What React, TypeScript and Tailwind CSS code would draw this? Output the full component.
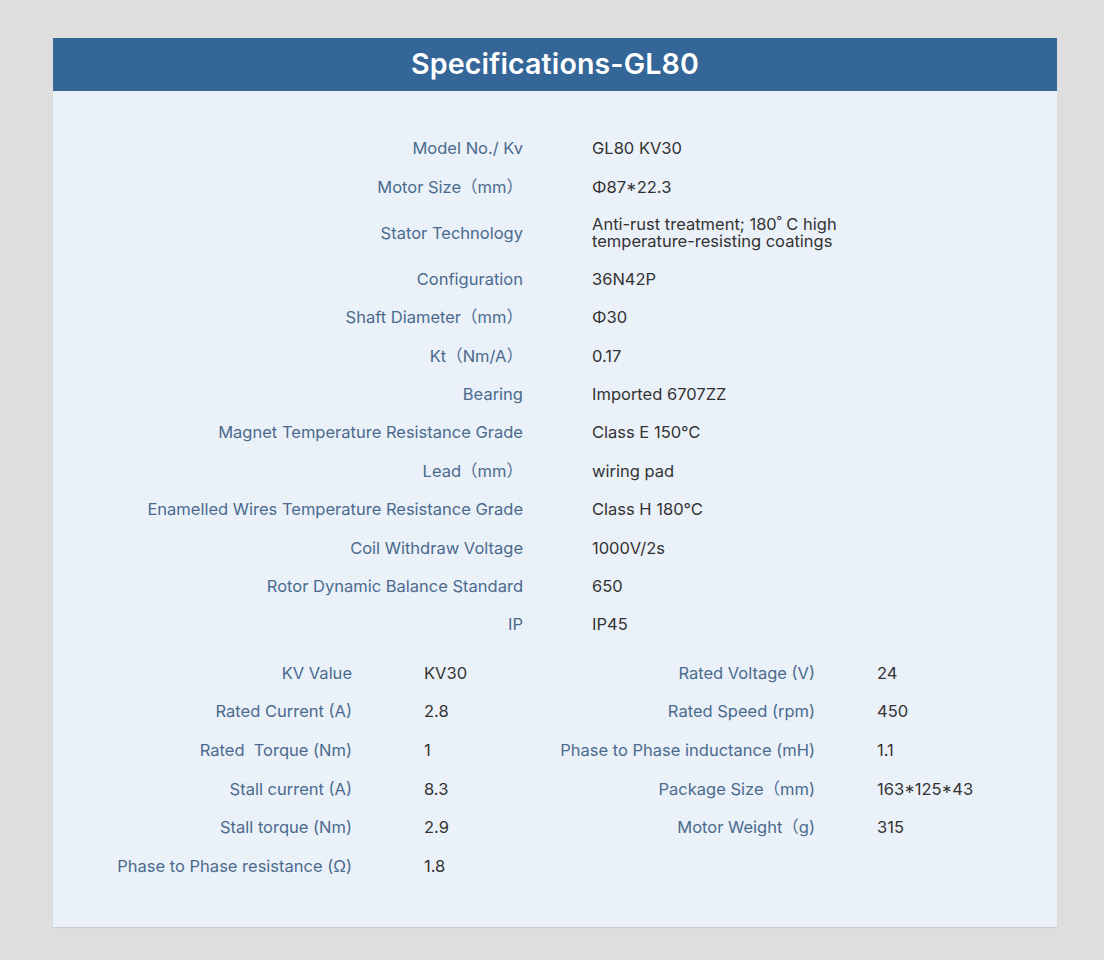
const FONT = "font-['Inter','Noto_Sans_CJK_SC',sans-serif]";

const specs: { label: string; value: React.ReactNode; tall?: boolean }[] = [
  { label: "Model No./ Kv", value: "GL80 KV30" },
  { label: "Motor Size（mm）", value: "Φ87*22.3" },
  {
    label: "Stator Technology",
    tall: true,
    value: (
      <>
        Anti-rust treatment; 180˚ C high
        <br />
        temperature-resisting coatings
      </>
    ),
  },
  { label: "Configuration", value: "36N42P" },
  { label: "Shaft Diameter（mm）", value: "Φ30" },
  { label: "Kt（Nm/A）", value: "0.17" },
  { label: "Bearing", value: "Imported 6707ZZ" },
  { label: "Magnet Temperature Resistance Grade", value: "Class E 150℃" },
  { label: "Lead（mm）", value: "wiring pad" },
  { label: "Enamelled Wires Temperature Resistance Grade", value: "Class H 180℃" },
  { label: "Coil Withdraw Voltage", value: "1000V/2s" },
  { label: "Rotor Dynamic Balance Standard", value: "650" },
  { label: "IP", value: "IP45" },
];

const perf: [string, string, string, string][] = [
  ["KV Value", "KV30", "Rated Voltage (V)", "24"],
  ["Rated Current (A)", "2.8", "Rated Speed (rpm)", "450"],
  ["Rated\u00a0\u00a0Torque (Nm)", "1", "Phase to Phase inductance (mH)", "1.1"],
  ["Stall current (A)", "8.3", "Package Size（mm)", "163*125*43"],
  ["Stall torque (Nm)", "2.9", "Motor Weight（g)", "315"],
  ["Phase to Phase resistance (Ω)", "1.8", "", ""],
];

export default function App() {
  return (
    <div className={`min-h-[960px] bg-[#dedede] pt-[38px] pl-[53px] ${FONT}`}>
      <div className="w-[1004px] bg-[#ebf1f8] shadow-[0_1px_1px_rgba(0,0,0,0.08)]">
        <div className="flex h-[53px] items-center justify-center bg-[#346698]">
          <h1 className="text-[28.6px] font-semibold leading-none tracking-[0.1px] text-white">
            Specifications-GL80
          </h1>
        </div>

        <div className="pt-[38px] pb-[42px] text-[16.5px] leading-[16px]">
          <div className="grid grid-cols-[470px_1fr]">
            {specs.map((s) => (
              <div key={s.label} className="contents">
                <div
                  className={`flex items-center justify-end text-right text-[#4a6b8e] ${
                    s.tall ? "py-[10px]" : "py-[11.2px]"
                  }`}
                >
                  {s.label}
                </div>
                <div
                  className={`flex items-center pl-[69px] text-[#333333] ${
                    s.tall ? "py-[10px] leading-[17px]" : "py-[11.2px]"
                  }`}
                >
                  <span>{s.value}</span>
                </div>
              </div>
            ))}
          </div>

          <div className="mt-[10px] grid grid-cols-[299px_188px_275px_1fr]">
            {perf.map(([l1, v1, l2, v2]) => (
              <div key={l1} className="contents">
                <div className="flex items-center justify-end py-[11.3px] text-right text-[#4a6b8e]">
                  {l1}
                </div>
                <div className="flex items-center py-[11.3px] pl-[72px] text-[#333333]">
                  {v1}
                </div>
                <div className="flex items-center justify-end py-[11.3px] text-right text-[#4a6b8e] whitespace-nowrap">
                  {l2}
                </div>
                <div className="flex items-center py-[11.3px] pl-[62px] text-[#333333]">
                  {v2}
                </div>
              </div>
            ))}
          </div>
        </div>
      </div>
    </div>
  );
}
